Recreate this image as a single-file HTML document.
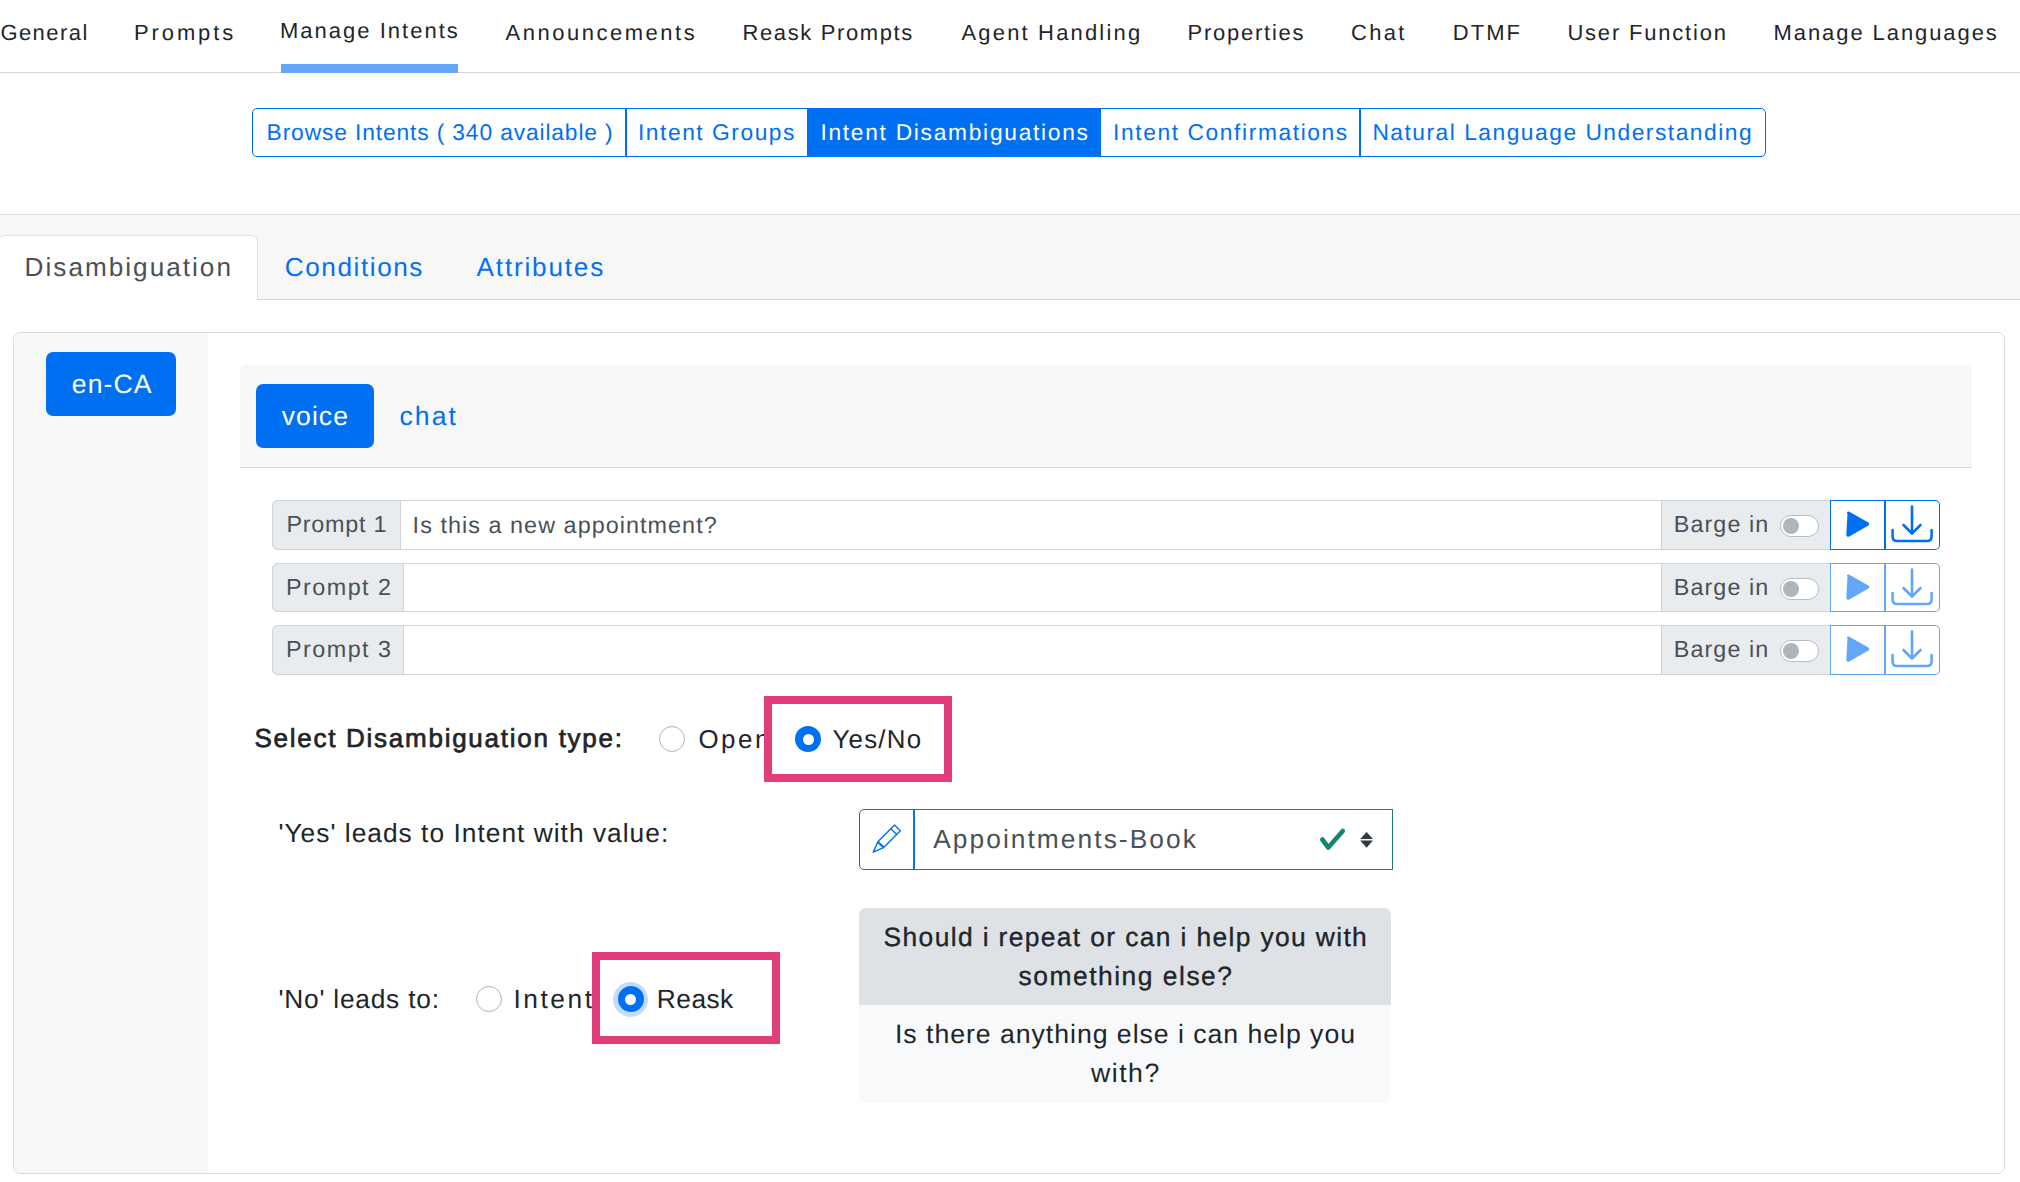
<!DOCTYPE html>
<html><head><meta charset="utf-8"><style>
html,body{margin:0;padding:0;background:#fff}
body{width:2020px;height:1182px;position:relative;overflow:hidden;font-family:"Liberation Sans",sans-serif}
.t{position:absolute;white-space:nowrap;line-height:1;font-family:"Liberation Sans",sans-serif;text-rendering:geometricPrecision}

</style></head><body>
<div style="position:absolute;box-sizing:border-box;left:0;top:72px;width:2020px;height:1px;background:#d6d6d6"></div>
<div style="position:absolute;box-sizing:border-box;left:281px;top:64px;width:177px;height:9px;background:#64a7f8"></div>
<div style="position:absolute;box-sizing:border-box;left:252px;top:108px;width:1514px;height:49px;border:1px solid #0070f3;border-radius:5px"></div>
<div style="position:absolute;box-sizing:border-box;left:625px;top:108px;width:2px;height:49px;background:#0070f3"></div>
<div style="position:absolute;box-sizing:border-box;left:807px;top:108px;width:294px;height:49px;background:#0070f3"></div>
<div style="position:absolute;box-sizing:border-box;left:1359px;top:108px;width:2px;height:49px;background:#0070f3"></div>
<div style="position:absolute;box-sizing:border-box;left:0;top:214px;width:2020px;height:86px;background:#f7f7f7;border-top:1px solid #dcdcdc;border-bottom:1px solid #d6d6d6"></div>
<div style="position:absolute;box-sizing:border-box;left:-2px;top:235px;width:260px;height:65px;background:#fff;border:1px solid #dee2e6;border-bottom:0;border-radius:7px 7px 0 0"></div>
<div style="position:absolute;box-sizing:border-box;left:13px;top:332px;width:1992px;height:842px;border:1px solid #dcdcdc;border-radius:7px;background:#fff"></div>
<div style="position:absolute;box-sizing:border-box;left:14px;top:333px;width:194px;height:840px;background:#f7f7f7;border-radius:6px 0 0 6px"></div>
<div style="position:absolute;box-sizing:border-box;left:46px;top:352px;width:130px;height:64px;background:#0070f3;border-radius:7px"></div>
<div style="position:absolute;box-sizing:border-box;left:240px;top:365px;width:1732px;height:103px;background:#f7f7f7;border-bottom:1px solid #d8d8d8;border-radius:6px 6px 0 0"></div>
<div style="position:absolute;box-sizing:border-box;left:256px;top:384px;width:118px;height:64px;background:#0070f3;border-radius:7px"></div>
<div style="position:absolute;box-sizing:border-box;left:272px;top:500px;width:1558px;height:50px;border:1px solid #ced4da;border-radius:6px 0 0 6px;background:#fff"></div>
<div style="position:absolute;box-sizing:border-box;left:272px;top:500px;width:128.5px;height:50px;border:1px solid #ced4da;border-radius:6px 0 0 6px;background:#e9ecef"></div>
<div style="position:absolute;box-sizing:border-box;left:1661px;top:500px;width:170px;height:50px;border:1px solid #ced4da;background:#e9ecef"></div>
<div style="position:absolute;box-sizing:border-box;left:1780px;top:515px;width:39px;height:22px;border:1px solid #b8bcc0;border-radius:11px;background:#fff"></div>
<div style="position:absolute;box-sizing:border-box;left:1783px;top:518px;width:16px;height:16px;border-radius:50%;background:#adb5bd"></div>
<div style="position:absolute;box-sizing:border-box;left:1830px;top:500px;width:56px;height:50px;border:1px solid #0070f3;background:#fff"></div>
<div style="position:absolute;box-sizing:border-box;left:1884px;top:500px;width:56px;height:50px;border:1px solid #0070f3;border-left-width:2px;border-radius:0 5px 5px 0;background:#fff"></div>
<svg style="position:absolute;left:1830px;top:500px" width="110" height="50" viewBox="0 0 110 50">
<path d="M18.5 13.5 Q17.3 12.3 18.8 12.6 L37.5 23 Q39 24 37.5 25 L18.8 35.6 Q17.3 36.2 17.3 34.5 Z" fill="#0070f3" stroke="#0070f3" stroke-width="2" stroke-linejoin="round"/>
<g fill="none" stroke="#0070f3" stroke-width="2.6" stroke-linecap="round" stroke-linejoin="round">
<path d="M82 6.5 V33"/><path d="M73.5 25 L82 33.5 L90.5 25"/>
<path d="M62.6 30 V36.5 Q62.6 41 67 41 H97 Q101.6 41 101.6 36.5 V30"/>
</g></svg>
<div style="position:absolute;box-sizing:border-box;left:272px;top:563px;width:1558px;height:49px;border:1px solid #ced4da;border-radius:6px 0 0 6px;background:#fff"></div>
<div style="position:absolute;box-sizing:border-box;left:272px;top:563px;width:132px;height:49px;border:1px solid #ced4da;border-radius:6px 0 0 6px;background:#e9ecef"></div>
<div style="position:absolute;box-sizing:border-box;left:1661px;top:563px;width:170px;height:49px;border:1px solid #ced4da;background:#e9ecef"></div>
<div style="position:absolute;box-sizing:border-box;left:1780px;top:578px;width:39px;height:22px;border:1px solid #b8bcc0;border-radius:11px;background:#fff"></div>
<div style="position:absolute;box-sizing:border-box;left:1783px;top:581px;width:16px;height:16px;border-radius:50%;background:#adb5bd"></div>
<div style="position:absolute;box-sizing:border-box;left:1830px;top:563px;width:56px;height:49px;border:1px solid #64a6f8;background:#fff"></div>
<div style="position:absolute;box-sizing:border-box;left:1884px;top:563px;width:56px;height:49px;border:1px solid #64a6f8;border-left-width:2px;border-radius:0 5px 5px 0;background:#fff"></div>
<svg style="position:absolute;left:1830px;top:563px" width="110" height="50" viewBox="0 0 110 50">
<path d="M18.5 13.5 Q17.3 12.3 18.8 12.6 L37.5 23 Q39 24 37.5 25 L18.8 35.6 Q17.3 36.2 17.3 34.5 Z" fill="#64a6f8" stroke="#64a6f8" stroke-width="2" stroke-linejoin="round"/>
<g fill="none" stroke="#64a6f8" stroke-width="2.6" stroke-linecap="round" stroke-linejoin="round">
<path d="M82 6.5 V33"/><path d="M73.5 25 L82 33.5 L90.5 25"/>
<path d="M62.6 30 V36.5 Q62.6 41 67 41 H97 Q101.6 41 101.6 36.5 V30"/>
</g></svg>
<div style="position:absolute;box-sizing:border-box;left:272px;top:625px;width:1558px;height:50px;border:1px solid #ced4da;border-radius:6px 0 0 6px;background:#fff"></div>
<div style="position:absolute;box-sizing:border-box;left:272px;top:625px;width:132px;height:50px;border:1px solid #ced4da;border-radius:6px 0 0 6px;background:#e9ecef"></div>
<div style="position:absolute;box-sizing:border-box;left:1661px;top:625px;width:170px;height:50px;border:1px solid #ced4da;background:#e9ecef"></div>
<div style="position:absolute;box-sizing:border-box;left:1780px;top:640px;width:39px;height:22px;border:1px solid #b8bcc0;border-radius:11px;background:#fff"></div>
<div style="position:absolute;box-sizing:border-box;left:1783px;top:643px;width:16px;height:16px;border-radius:50%;background:#adb5bd"></div>
<div style="position:absolute;box-sizing:border-box;left:1830px;top:625px;width:56px;height:50px;border:1px solid #64a6f8;background:#fff"></div>
<div style="position:absolute;box-sizing:border-box;left:1884px;top:625px;width:56px;height:50px;border:1px solid #64a6f8;border-left-width:2px;border-radius:0 5px 5px 0;background:#fff"></div>
<svg style="position:absolute;left:1830px;top:625px" width="110" height="50" viewBox="0 0 110 50">
<path d="M18.5 13.5 Q17.3 12.3 18.8 12.6 L37.5 23 Q39 24 37.5 25 L18.8 35.6 Q17.3 36.2 17.3 34.5 Z" fill="#64a6f8" stroke="#64a6f8" stroke-width="2" stroke-linejoin="round"/>
<g fill="none" stroke="#64a6f8" stroke-width="2.6" stroke-linecap="round" stroke-linejoin="round">
<path d="M82 6.5 V33"/><path d="M73.5 25 L82 33.5 L90.5 25"/>
<path d="M62.6 30 V36.5 Q62.6 41 67 41 H97 Q101.6 41 101.6 36.5 V30"/>
</g></svg>
<div style="position:absolute;box-sizing:border-box;left:659px;top:726px;width:26px;height:26px;border-radius:50%;border:1px solid #adb5bd;background:#fff"></div>
<div style="position:absolute;box-sizing:border-box;left:795px;top:726px;width:26px;height:26px;border-radius:50%;background:#0070f3"></div>
<div style="position:absolute;box-sizing:border-box;left:802.5px;top:733.5px;width:11px;height:11px;border-radius:50%;background:#fff"></div>
<div style="position:absolute;box-sizing:border-box;left:475.5px;top:986px;width:26px;height:26px;border-radius:50%;border:1px solid #adb5bd;background:#fff"></div>
<div style="position:absolute;box-sizing:border-box;left:612.9px;top:981.6px;width:35.2px;height:35.2px;border-radius:50%;background:#c5dbfe"></div>
<div style="position:absolute;box-sizing:border-box;left:617.5px;top:986.2px;width:26px;height:26px;border-radius:50%;background:#0070f3"></div>
<div style="position:absolute;box-sizing:border-box;left:625.0px;top:993.7px;width:11px;height:11px;border-radius:50%;background:#fff"></div>
<div style="position:absolute;box-sizing:border-box;left:914px;top:809px;width:479px;height:61px;border:1px solid #1a8270;border-left:0;background:#fff"></div>
<div style="position:absolute;box-sizing:border-box;left:859px;top:809px;width:56px;height:61px;border:1px solid #0070f3;border-radius:5px 0 0 5px;background:#fff"></div>
<div style="position:absolute;box-sizing:border-box;left:913px;top:810px;width:1px;height:59px;background:#1a8270"></div>
<svg style="position:absolute;left:859px;top:809px" width="56" height="61" viewBox="0 0 56 61">
<g transform="translate(14.3,43.1) rotate(-45)" fill="none" stroke="#0070f3" stroke-width="1.4" stroke-linejoin="round">
<path d="M0 0 L10.5 -4.1 L34.2 -4.1 L34.2 4.1 L10.5 4.1 Z"/><path d="M10.5 -4.1 L10.5 4.1" stroke-width="2.2"/><path d="M28.9 -4.1 L28.9 4.1"/>
</g></svg>
<svg style="position:absolute;left:1310px;top:820px" width="70" height="40" viewBox="0 0 70 40">
<path d="M12.3 19.5 L18.3 27.5 L32.8 11" fill="none" stroke="#13866f" stroke-width="4.6" stroke-linecap="round" stroke-linejoin="round"/>
<path d="M50.2 19 L56.6 12 L63 19 Z M50.2 20.6 L63 20.6 L56.6 27.8 Z" fill="#343a40"/>
</svg>
<div style="position:absolute;box-sizing:border-box;left:859px;top:908px;width:532px;height:195px;border-radius:7px;background:#f8f9fa;overflow:hidden"></div>
<div style="position:absolute;box-sizing:border-box;left:859px;top:908px;width:532px;height:97px;border-radius:7px 7px 0 0;background:#dee2e6"></div>
<span id="n1" class="t" style="left:0.40px;top:22.00px;font-size:21.96px;letter-spacing:1.467px;color:#212529;font-weight:normal"><i class="mk" style="display:inline-block;width:0;height:0;vertical-align:baseline"></i>General</span>
<span id="n2" class="t" style="left:134.00px;top:22.00px;font-size:21.96px;letter-spacing:2.917px;color:#212529;font-weight:normal"><i class="mk" style="display:inline-block;width:0;height:0;vertical-align:baseline"></i>Prompts</span>
<span id="n3" class="t" style="left:280.00px;top:20.00px;font-size:21.96px;letter-spacing:2.038px;color:#212529;font-weight:normal"><i class="mk" style="display:inline-block;width:0;height:0;vertical-align:baseline"></i>Manage Intents</span>
<span id="n4" class="t" style="left:505.50px;top:22.00px;font-size:21.96px;letter-spacing:2.542px;color:#212529;font-weight:normal"><i class="mk" style="display:inline-block;width:0;height:0;vertical-align:baseline"></i>Announcements</span>
<span id="n5" class="t" style="left:742.50px;top:22.00px;font-size:21.96px;letter-spacing:1.646px;color:#212529;font-weight:normal"><i class="mk" style="display:inline-block;width:0;height:0;vertical-align:baseline"></i>Reask Prompts</span>
<span id="n6" class="t" style="left:961.50px;top:22.00px;font-size:21.96px;letter-spacing:2.192px;color:#212529;font-weight:normal"><i class="mk" style="display:inline-block;width:0;height:0;vertical-align:baseline"></i>Agent Handling</span>
<span id="n7" class="t" style="left:1187.50px;top:22.00px;font-size:21.96px;letter-spacing:1.778px;color:#212529;font-weight:normal"><i class="mk" style="display:inline-block;width:0;height:0;vertical-align:baseline"></i>Properties</span>
<span id="n8" class="t" style="left:1351.00px;top:22.00px;font-size:21.96px;letter-spacing:2.333px;color:#212529;font-weight:normal"><i class="mk" style="display:inline-block;width:0;height:0;vertical-align:baseline"></i>Chat</span>
<span id="n9" class="t" style="left:1452.80px;top:22.00px;font-size:21.96px;letter-spacing:2.033px;color:#212529;font-weight:normal"><i class="mk" style="display:inline-block;width:0;height:0;vertical-align:baseline"></i>DTMF</span>
<span id="n10" class="t" style="left:1567.40px;top:22.00px;font-size:21.96px;letter-spacing:1.825px;color:#212529;font-weight:normal"><i class="mk" style="display:inline-block;width:0;height:0;vertical-align:baseline"></i>User Function</span>
<span id="n11" class="t" style="left:1773.60px;top:22.00px;font-size:21.96px;letter-spacing:1.940px;color:#212529;font-weight:normal"><i class="mk" style="display:inline-block;width:0;height:0;vertical-align:baseline"></i>Manage Languages</span>
<span id="b1" class="t" style="left:266.60px;top:121.00px;font-size:22.78px;letter-spacing:0.877px;color:#0070f3;font-weight:normal"><i class="mk" style="display:inline-block;width:0;height:0;vertical-align:baseline"></i>Browse Intents ( 340 available )</span>
<span id="b2" class="t" style="left:638.00px;top:121.00px;font-size:22.78px;letter-spacing:1.542px;color:#0070f3;font-weight:normal"><i class="mk" style="display:inline-block;width:0;height:0;vertical-align:baseline"></i>Intent Groups</span>
<span id="b3" class="t" style="left:820.40px;top:121.00px;font-size:22.78px;letter-spacing:1.714px;color:#ffffff;font-weight:normal"><i class="mk" style="display:inline-block;width:0;height:0;vertical-align:baseline"></i>Intent Disambiguations</span>
<span id="b4" class="t" style="left:1113.00px;top:121.00px;font-size:22.78px;letter-spacing:1.605px;color:#0070f3;font-weight:normal"><i class="mk" style="display:inline-block;width:0;height:0;vertical-align:baseline"></i>Intent Confirmations</span>
<span id="b5" class="t" style="left:1372.40px;top:121.00px;font-size:22.78px;letter-spacing:1.510px;color:#0070f3;font-weight:normal"><i class="mk" style="display:inline-block;width:0;height:0;vertical-align:baseline"></i>Natural Language Understanding</span>
<span id="t1" class="t" style="left:24.60px;top:254.00px;font-size:26.15px;letter-spacing:2.015px;color:#495057;font-weight:normal"><i class="mk" style="display:inline-block;width:0;height:0;vertical-align:baseline"></i>Disambiguation</span>
<span id="t2" class="t" style="left:284.80px;top:254.00px;font-size:26.15px;letter-spacing:1.567px;color:#0070f3;font-weight:normal"><i class="mk" style="display:inline-block;width:0;height:0;vertical-align:baseline"></i>Conditions</span>
<span id="t3" class="t" style="left:476.60px;top:254.00px;font-size:26.15px;letter-spacing:1.800px;color:#0070f3;font-weight:normal"><i class="mk" style="display:inline-block;width:0;height:0;vertical-align:baseline"></i>Attributes</span>
<span id="l1" class="t" style="left:71.80px;top:371.00px;font-size:26.6px;letter-spacing:1.050px;color:#ffffff;font-weight:normal"><i class="mk" style="display:inline-block;width:0;height:0;vertical-align:baseline"></i>en-CA</span>
<span id="v1" class="t" style="left:281.80px;top:403.00px;font-size:26.6px;letter-spacing:1.025px;color:#ffffff;font-weight:normal"><i class="mk" style="display:inline-block;width:0;height:0;vertical-align:baseline"></i>voice</span>
<span id="v2" class="t" style="left:399.40px;top:403.00px;font-size:26.6px;letter-spacing:2.100px;color:#0070f3;font-weight:normal"><i class="mk" style="display:inline-block;width:0;height:0;vertical-align:baseline"></i>chat</span>
<span id="p1" class="t" style="left:286.40px;top:513.00px;font-size:23.37px;letter-spacing:0.757px;color:#495057;font-weight:normal"><i class="mk" style="display:inline-block;width:0;height:0;vertical-align:baseline"></i>Prompt 1</span>
<span id="p1t" class="t" style="left:412.60px;top:514.00px;font-size:23.37px;letter-spacing:1.048px;color:#495057;font-weight:normal"><i class="mk" style="display:inline-block;width:0;height:0;vertical-align:baseline"></i>Is this a new appointment?</span>
<span id="p2" class="t" style="left:286.00px;top:576.00px;font-size:23.37px;letter-spacing:1.457px;color:#495057;font-weight:normal"><i class="mk" style="display:inline-block;width:0;height:0;vertical-align:baseline"></i>Prompt 2</span>
<span id="p3" class="t" style="left:286.00px;top:638.00px;font-size:23.37px;letter-spacing:1.457px;color:#495057;font-weight:normal"><i class="mk" style="display:inline-block;width:0;height:0;vertical-align:baseline"></i>Prompt 3</span>
<span id="g1" class="t" style="left:1673.80px;top:513.00px;font-size:23.3px;letter-spacing:1.100px;color:#495057;font-weight:normal"><i class="mk" style="display:inline-block;width:0;height:0;vertical-align:baseline"></i>Barge in</span>
<span id="g2" class="t" style="left:1673.80px;top:576.00px;font-size:23.3px;letter-spacing:1.100px;color:#495057;font-weight:normal"><i class="mk" style="display:inline-block;width:0;height:0;vertical-align:baseline"></i>Barge in</span>
<span id="g3" class="t" style="left:1673.80px;top:638.00px;font-size:23.3px;letter-spacing:1.100px;color:#495057;font-weight:normal"><i class="mk" style="display:inline-block;width:0;height:0;vertical-align:baseline"></i>Barge in</span>
<span id="s1" class="t" style="left:254.40px;top:725.00px;font-size:26.0px;letter-spacing:1.742px;color:#212529;font-weight:normal;-webkit-text-stroke:0.7px #212529"><i class="mk" style="display:inline-block;width:0;height:0;vertical-align:baseline"></i>Select Disambiguation type:</span>
<span id="s2" class="t" style="left:698.40px;top:728.00px;font-size:25.86px;letter-spacing:2.600px;color:#212529;font-weight:normal"><i class="mk" style="display:inline-block;width:0;height:0;vertical-align:baseline"></i>Open</span>
<span id="s3" class="t" style="left:832.40px;top:728.00px;font-size:25.86px;letter-spacing:1.260px;color:#212529;font-weight:normal"><i class="mk" style="display:inline-block;width:0;height:0;vertical-align:baseline"></i>Yes/No</span>
<span id="y1" class="t" style="left:278.40px;top:820.00px;font-size:26.3px;letter-spacing:1.025px;color:#212529;font-weight:normal"><i class="mk" style="display:inline-block;width:0;height:0;vertical-align:baseline"></i>'Yes' leads to Intent with value:</span>
<span id="y2" class="t" style="left:933.20px;top:826.00px;font-size:26.33px;letter-spacing:2.056px;color:#495057;font-weight:normal"><i class="mk" style="display:inline-block;width:0;height:0;vertical-align:baseline"></i>Appointments-Book</span>
<span id="o1" class="t" style="left:278.40px;top:986.00px;font-size:26.32px;letter-spacing:0.777px;color:#212529;font-weight:normal"><i class="mk" style="display:inline-block;width:0;height:0;vertical-align:baseline"></i>'No' leads to:</span>
<span id="o2" class="t" style="left:513.40px;top:986.00px;font-size:26.32px;letter-spacing:2.560px;color:#212529;font-weight:normal"><i class="mk" style="display:inline-block;width:0;height:0;vertical-align:baseline"></i>Intent</span>
<span id="o3" class="t" style="left:656.80px;top:986.00px;font-size:26.32px;letter-spacing:0.475px;color:#212529;font-weight:normal"><i class="mk" style="display:inline-block;width:0;height:0;vertical-align:baseline"></i>Reask</span>
<span id="r1" class="t" style="left:883.60px;top:924.00px;font-size:26.4px;letter-spacing:1.362px;color:#212529;font-weight:normal;-webkit-text-stroke:0.35px #212529"><i class="mk" style="display:inline-block;width:0;height:0;vertical-align:baseline"></i>Should i repeat or can i help you with</span>
<span id="r2" class="t" style="left:1018.60px;top:963.00px;font-size:26.4px;letter-spacing:1.514px;color:#212529;font-weight:normal;-webkit-text-stroke:0.35px #212529"><i class="mk" style="display:inline-block;width:0;height:0;vertical-align:baseline"></i>something else?</span>
<span id="r3" class="t" style="left:895.00px;top:1021.00px;font-size:26.67px;letter-spacing:0.964px;color:#212529;font-weight:normal"><i class="mk" style="display:inline-block;width:0;height:0;vertical-align:baseline"></i>Is there anything else i can help you</span>
<span id="r4" class="t" style="left:1091.00px;top:1060.00px;font-size:26.67px;letter-spacing:1.500px;color:#212529;font-weight:normal"><i class="mk" style="display:inline-block;width:0;height:0;vertical-align:baseline"></i>with?</span>
<div style="position:absolute;box-sizing:border-box;left:764px;top:696px;width:188px;height:86px;border:8px solid #e13d7a"></div>
<div style="position:absolute;box-sizing:border-box;left:592px;top:952px;width:188px;height:92px;border:8px solid #e13d7a"></div>
</body></html>
